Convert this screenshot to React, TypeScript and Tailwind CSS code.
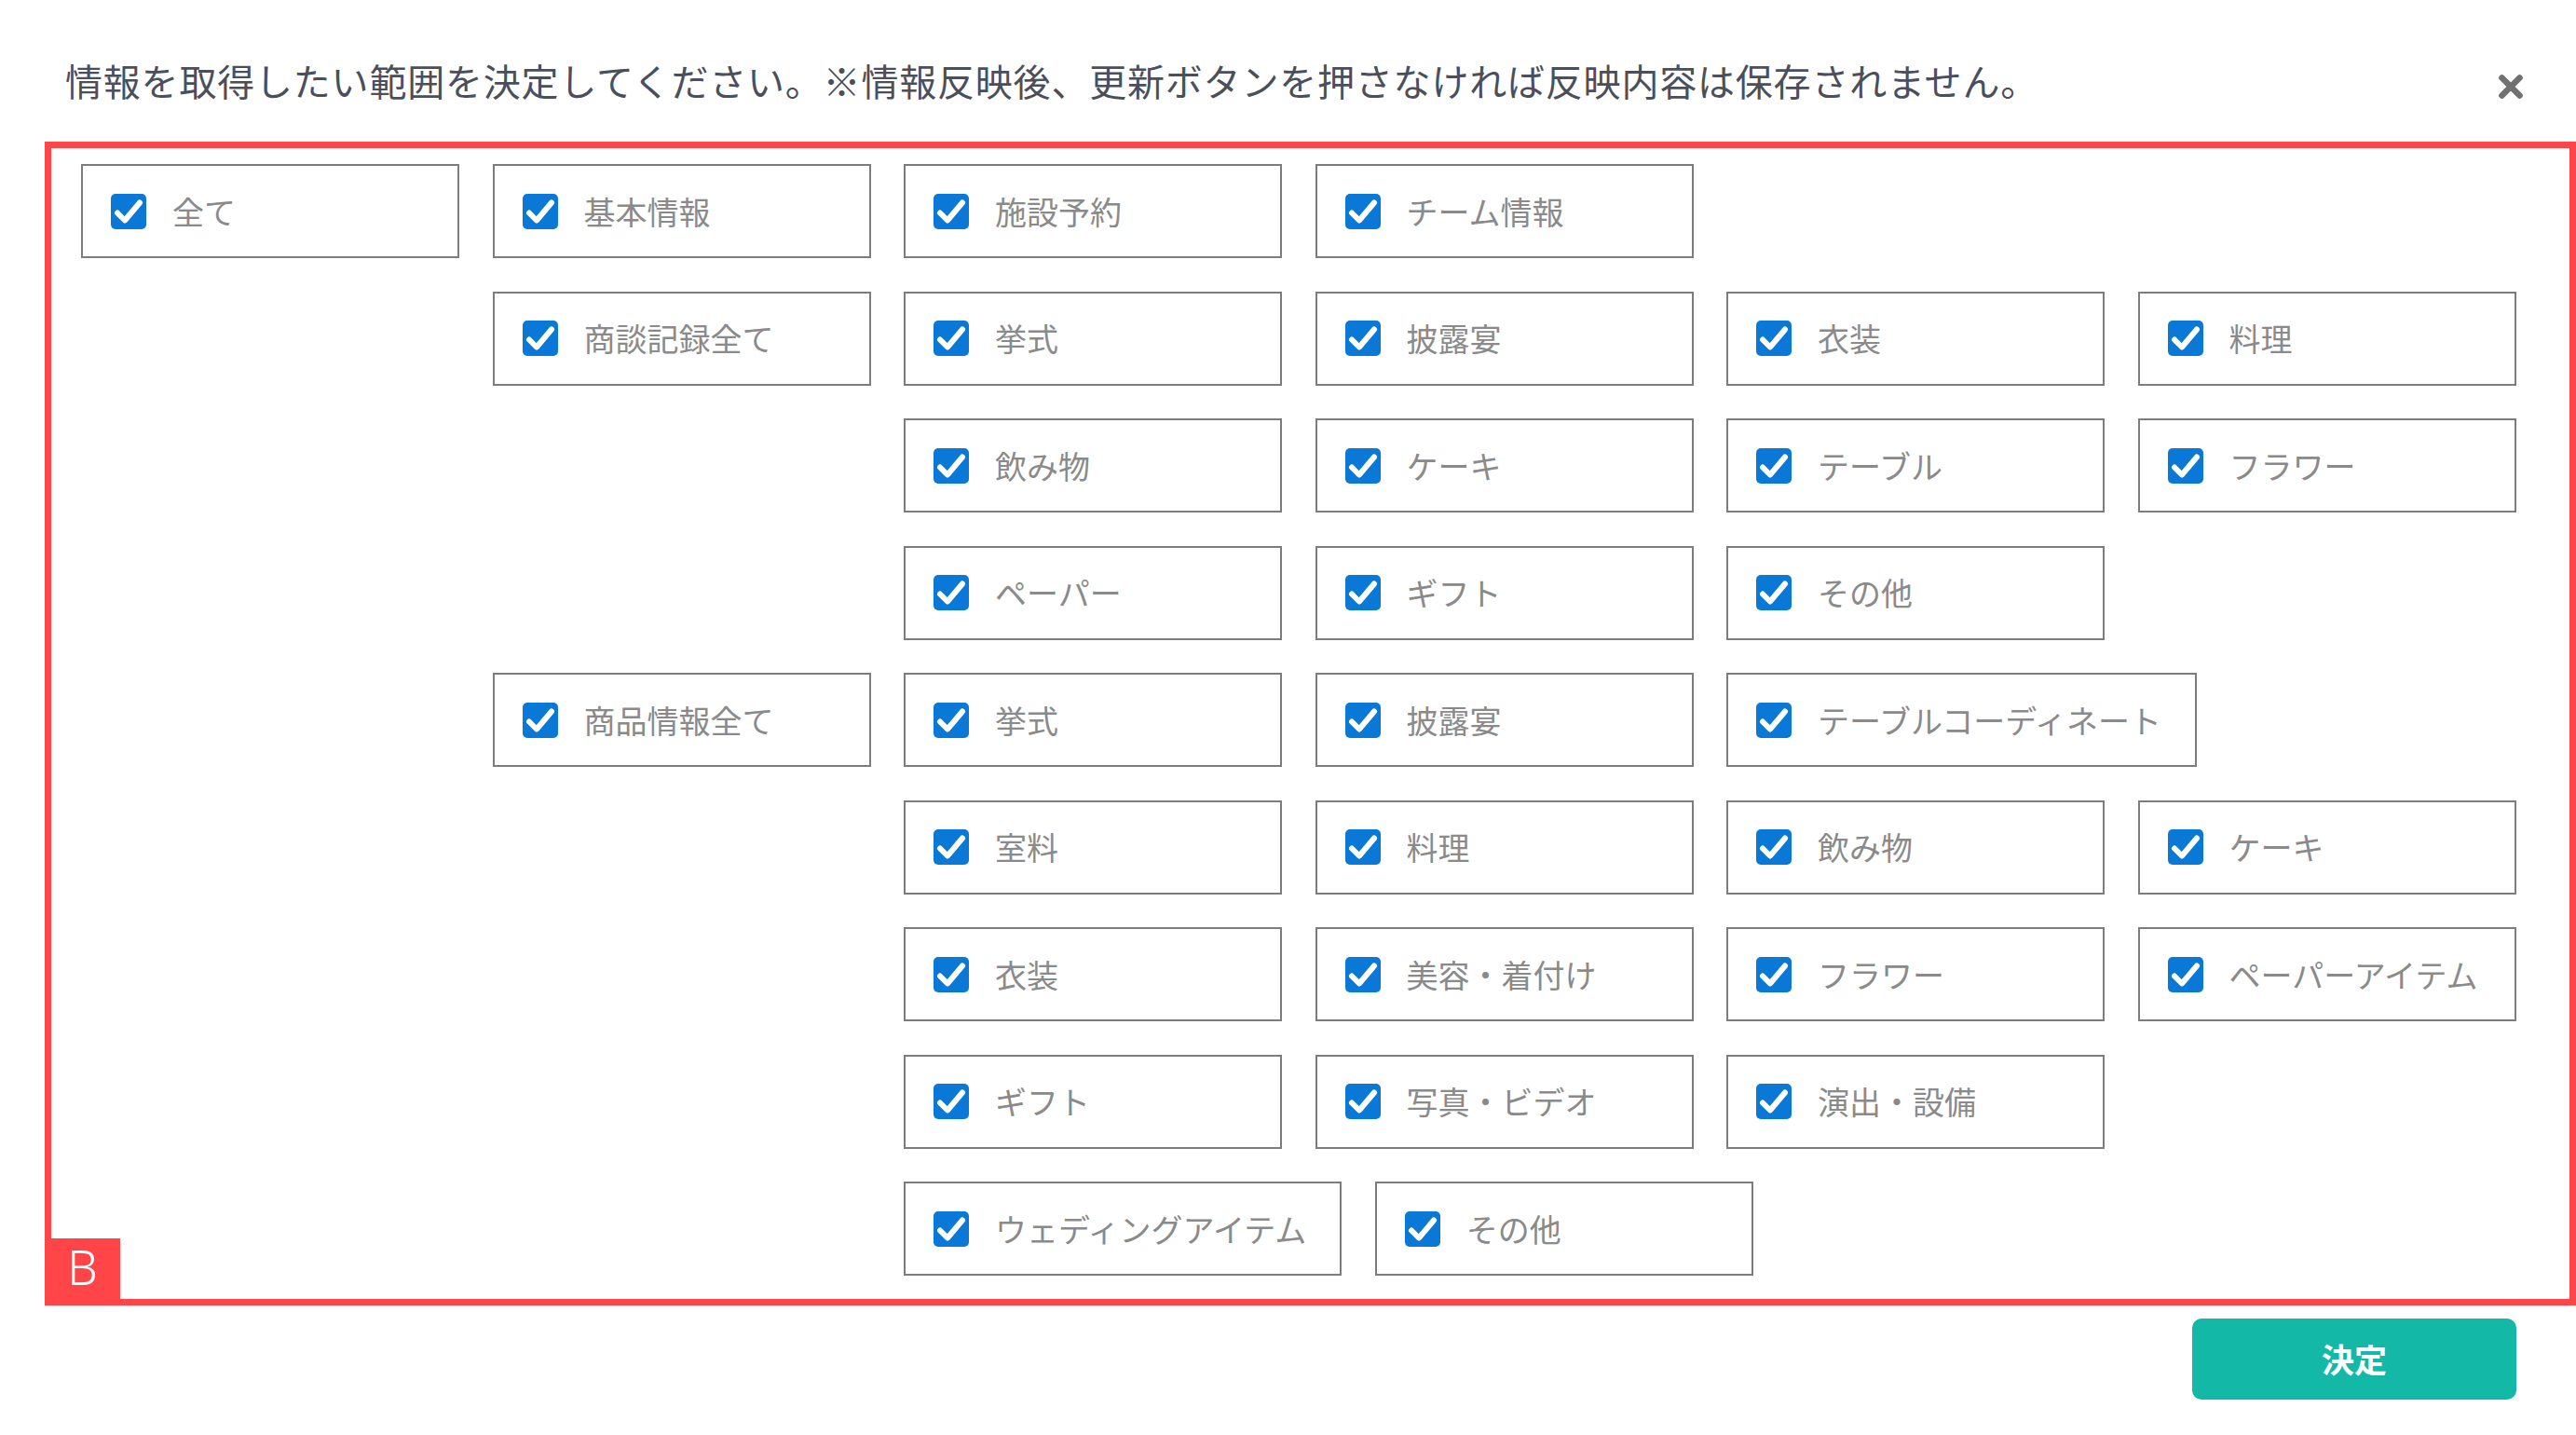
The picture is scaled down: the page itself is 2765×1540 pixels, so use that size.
import { X } from "lucide-react";

type Row = { indent: 0 | 1 | 2; items: string[] };

const rows: Row[] = [
  { indent: 0, items: ["全て", "基本情報", "施設予約", "チーム情報"] },
  { indent: 1, items: ["商談記録全て", "挙式", "披露宴", "衣装", "料理"] },
  { indent: 2, items: ["飲み物", "ケーキ", "テーブル", "フラワー"] },
  { indent: 2, items: ["ペーパー", "ギフト", "その他"] },
  { indent: 1, items: ["商品情報全て", "挙式", "披露宴", "テーブルコーディネート"] },
  { indent: 2, items: ["室料", "料理", "飲み物", "ケーキ"] },
  { indent: 2, items: ["衣装", "美容・着付け", "フラワー", "ペーパーアイテム"] },
  { indent: 2, items: ["ギフト", "写真・ビデオ", "演出・設備"] },
  { indent: 2, items: ["ウェディングアイテム", "その他"] },
];

const indentClass = {
  0: "",
  1: "ml-[441.5px]",
  2: "ml-[883px]",
};

function CheckIcon() {
  return (
    <span className="flex h-[38px] w-[38px] shrink-0 items-center justify-center rounded-[5px] bg-[#0a78d7]">
      <svg width="38" height="38" viewBox="0 0 38 38" fill="none">
        <path
          d="M7 20.5 L15 28.5 L31 9.5"
          stroke="white"
          strokeWidth="6"
          strokeLinecap="round"
          strokeLinejoin="round"
        />
      </svg>
    </span>
  );
}

function CheckBox({ label }: { label: string }) {
  return (
    <label className="flex h-[101px] min-w-[406px] shrink-0 items-center gap-[28px] border-2 border-[#7d7d7d] bg-white pl-[30px] pr-[36px]">
      <CheckIcon />
      <span className="whitespace-nowrap text-[34px] leading-none text-[#8a8a8a]">{label}</span>
    </label>
  );
}

export default function App() {
  return (
    <div className="relative h-[1540px] w-[2765px] overflow-hidden bg-white font-['Noto_Sans_CJK_JP',sans-serif]">
      <div className="flex h-[106px] items-start justify-between pl-[70px] pr-[50px] pt-[66px]">
        <p className="text-[40px] leading-[40px] tracking-[0.8px] text-[#4a4f5b]">
          情報を取得したい範囲を決定してください。※情報反映後、更新ボタンを押さなければ反映内容は保存されません。
        </p>
        <button className="mt-[7px] flex h-[40px] w-[40px] items-center justify-center text-[#717171]">
          <X size={38} strokeWidth={4.2} />
        </button>
      </div>

      <div className="relative ml-[48px] mt-[46px] h-[1249px] w-[2717px] border-[7px] border-[#ff4547] pl-[32px] pt-[17px]">
        <div className="flex flex-col gap-y-[35.5px]">
          {rows.map((row, i) => (
            <div key={i} className={`flex gap-x-[35.5px] ${indentClass[row.indent]}`}>
              {row.items.map((item) => (
                <CheckBox key={item} label={item} />
              ))}
            </div>
          ))}
        </div>
        <div className="absolute bottom-[-7px] left-[-7px] flex h-[72px] w-[81px] items-center justify-center bg-[#ff4547] pb-[12px] font-['Noto_Sans',sans-serif] text-[52px] font-light leading-none text-white">
          B
        </div>
      </div>

      <div className="flex justify-end pr-[64px] pt-[14px]">
        <button className="flex h-[87px] w-[348px] items-center justify-center rounded-[10px] bg-[#13b8a6] text-[35px] font-bold text-white">
          決定
        </button>
      </div>
    </div>
  );
}
